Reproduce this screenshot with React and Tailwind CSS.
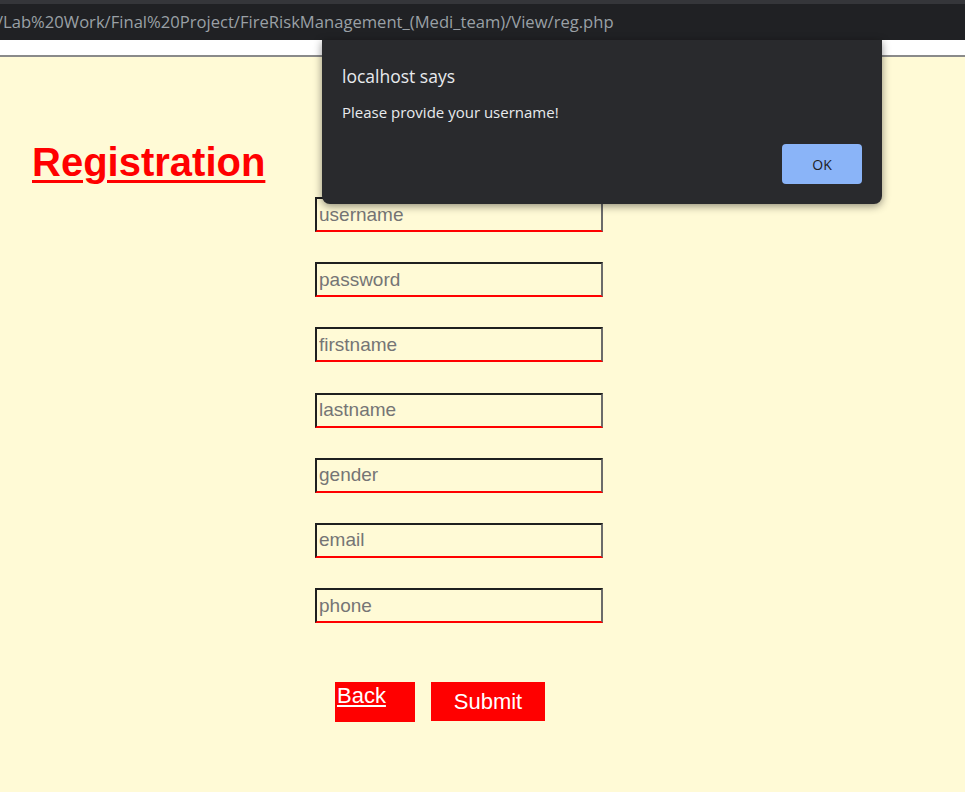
const FIELDS = ['username', 'password', 'firstname', 'lastname', 'gender', 'email', 'phone']

export default function App() {
  return (
    <div className="relative w-[965px] h-[792px] overflow-hidden bg-[#fffad6] font-['Liberation_Sans',Arial,sans-serif]">
      {/* browser chrome */}
      <div className="h-[4px] bg-[#35363a]" />
      <div className="h-[36px] bg-[#202124] flex items-center">
        <span className="-ml-[3px] text-[16.6px] text-[#9aa0a6] font-['Open_Sans',sans-serif] whitespace-nowrap">
          /Lab%20Work/Final%20Project/FireRiskManagement_(Medi_team)/View/reg.php
        </span>
      </div>
      <div className="h-[15px] bg-white" />
      <div className="h-[2px] bg-[#8a8a8a]" />

      {/* page */}
      <div className="pl-[32px] pt-[82px]">
        <h1 className="text-[40px] leading-[46px] font-bold text-[#ff0000] underline decoration-[3px] underline-offset-[4px]">
          Registration
        </h1>
      </div>

      <form className="ml-[315px] mt-[12px] flex flex-col gap-[30.2px]">
        {FIELDS.map((f) => (
          <input
            key={f}
            type={f === 'password' ? 'password' : 'text'}
            placeholder={f}
            className="w-[288px] h-[35px] bg-transparent border-2 border-t-[#1f1f1f] border-l-[#1f1f1f] border-r-[#6b6b6b] border-b-[#ff0000] px-[2px] text-[19px] placeholder:text-[#757575] outline-none"
          />
        ))}
        <div className="flex items-start gap-[16px] ml-[20px] mt-[29px]">
          <a href="#" className="w-[80px] h-[40px] bg-[#ff0000] text-white text-[22px] leading-[26px] underline pl-[2px] pt-[1px]">
            Back
          </a>
          <button type="button" className="w-[114px] h-[39px] bg-[#ff0000] text-white text-[22px] flex items-center justify-center">
            Submit
          </button>
        </div>
      </form>

      {/* alert dialog */}
      <div className="absolute left-[322px] top-[40px] w-[560px] h-[164px] bg-[#292a2d] rounded-b-[8px] shadow-[0_2px_8px_rgba(0,0,0,0.45)] font-['Open_Sans',sans-serif] text-[#e8eaed] px-[20px]">
        <div className="pt-[24px] text-[17.5px] leading-[24px]">localhost says</div>
        <div className="mt-[13px] text-[15px] leading-[22px]">Please provide your username!</div>
        <div className="flex justify-end mt-[21px]">
          <button type="button" className="w-[80px] h-[40px] rounded-[4px] bg-[#8ab4f8] text-[#202124] text-[14px]">
            OK
          </button>
        </div>
      </div>
    </div>
  )
}
